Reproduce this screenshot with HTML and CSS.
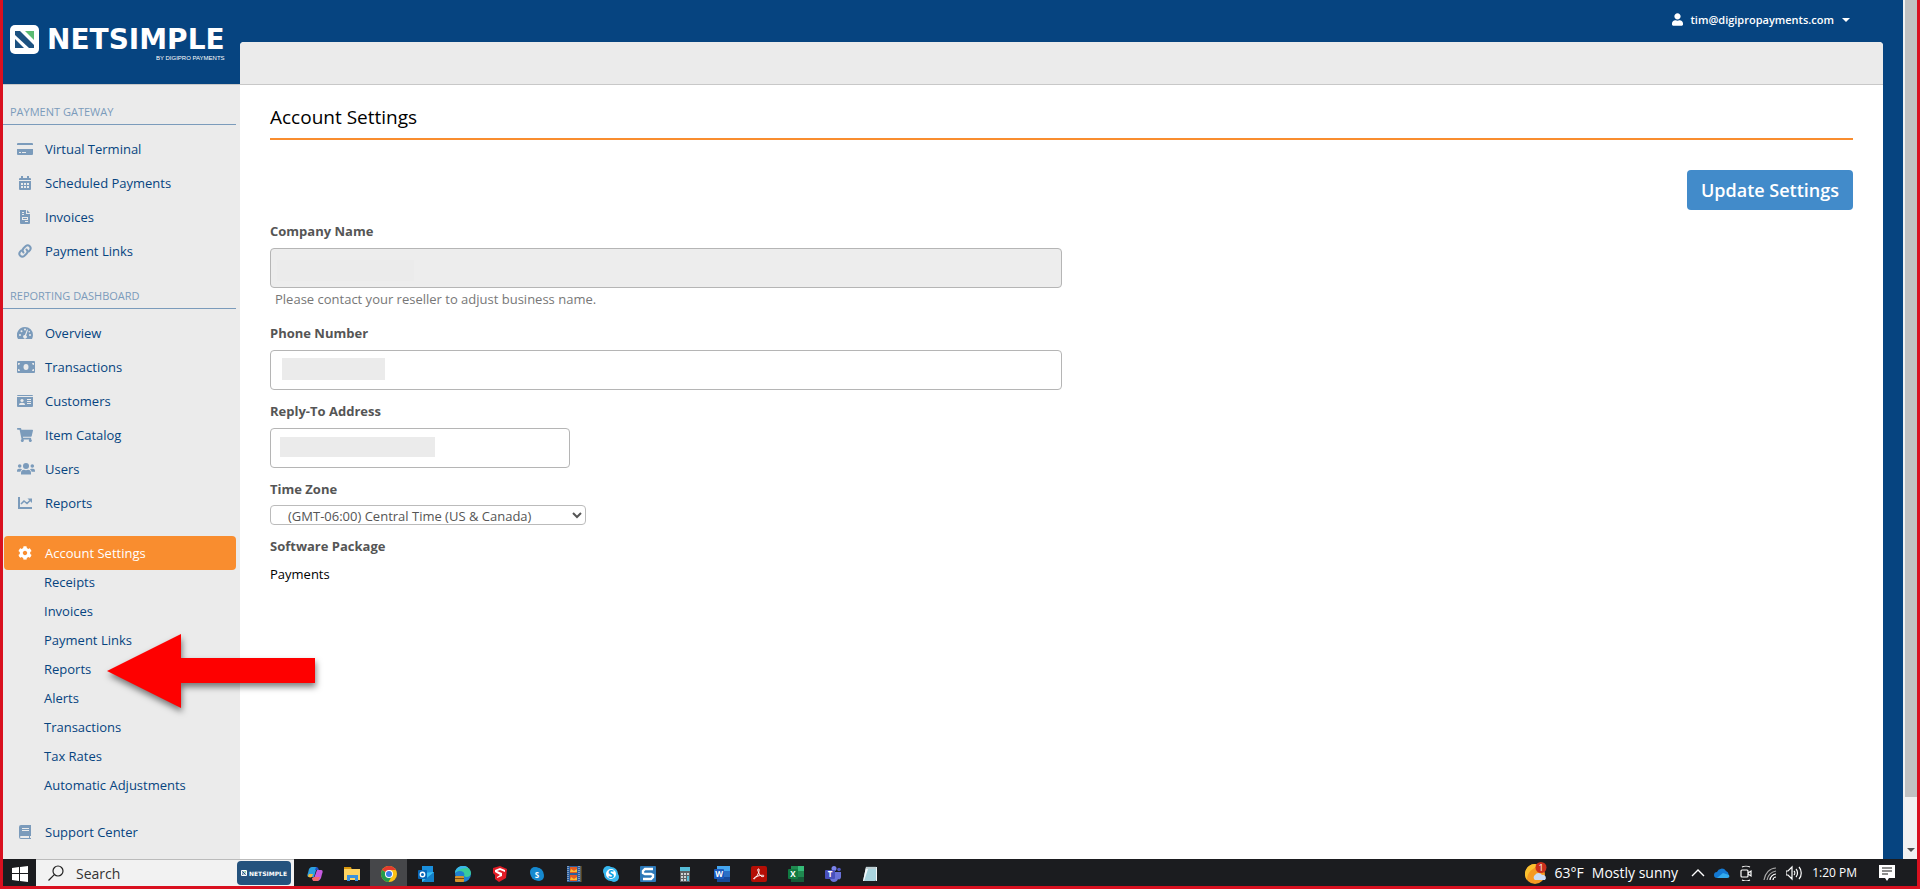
FILE: index.html
```html
<!DOCTYPE html>
<html lang="en">
<head>
  <meta charset="UTF-8" />
  <meta name="viewport" content="width=device-width, initial-scale=1" />
  <title>Account Settings - NetSimple</title>
  <link rel="stylesheet" href="styles.css">
</head>
<body>
  <div class="window">
    <div class="app">
      <aside class="sidebar">
        <a href="#" class="logo">
          <svg class="logo-mark" viewBox="0 0 29 29"><rect width="29" height="29" rx="5" fill="#fff"/><path d="M5 6h5l14 14v3h-5L5 10z" fill="#1c5180"/><path d="M5 14l9 9H5z" fill="#1c5180"/><path d="M15 6h9v9z" fill="#5bbb72"/></svg>
          <span class="logo-text">
            <span class="logo-name">NETSIMPLE</span>
            <span class="logo-by">BY DIGIPRO PAYMENTS</span>
          </span>
        </a>
        <nav class="menu">
          <h2>PAYMENT GATEWAY</h2>
          <ul>
            <li><a href="#"><svg viewBox="0 0 16 16"><path d="M1 2h14a1 1 0 0 1 1 1v1H0V3a1 1 0 0 1 1-1zM0 8h16v5a1 1 0 0 1-1 1H1a1 1 0 0 1-1-1zm2 3v1h2v-1zm3 0v1h4v-1z" fill-rule="evenodd"/></svg>Virtual Terminal</a></li>
            <li><a href="#"><svg viewBox="0 0 16 16"><path d="M4 1h2v2h4V1h2v2h1a1 1 0 0 1 1 1v1H2V4a1 1 0 0 1 1-1h1zM2 6h12v8a1 1 0 0 1-1 1H3a1 1 0 0 1-1-1zm2 2v2h2V8zm3 0v2h2V8zm3 0v2h2V8zm-6 3v2h2v-2zm3 0v2h2v-2zm3 0v2h2v-2z" fill-rule="evenodd"/></svg>Scheduled Payments</a></li>
            <li><a href="#"><svg viewBox="0 0 16 16"><path d="M3 1h6v4h4v9a1 1 0 0 1-1 1H4a1 1 0 0 1-1-1V2zm2 2v1h2V3zm0 2v1h2V5zm0 3v3h6V8zm1 1h4v1H6zm2 3v1h3v-1z" fill-rule="evenodd"/><path d="M10 1l3 3h-3z"/></svg>Invoices</a></li>
            <li><a href="#"><svg viewBox="0 0 16 16"><g fill="none" stroke="currentColor" stroke-width="2" stroke-linecap="round"><path d="M6.500 9.500a3 3 0 0 1 0-4.200l2.300-2.300a3 3 0 0 1 4.200 4.200l-1.300 1.300"/><path d="M9.500 6.500a3 3 0 0 1 0 4.200L7.200 13A3 3 0 0 1 3 8.800l1.300-1.300"/></g></svg>Payment Links</a></li>
          </ul>
          <h2 class="reporting">REPORTING DASHBOARD</h2>
          <ul>
            <li><a href="#"><svg viewBox="0 0 16 16"><path d="M8 2a8 8 0 0 1 8 8c0 1.500-.4 2.800-1 4H1a8 8 0 0 1 7-12z"/><g fill="#ebebeb"><circle cx="3" cy="10" r="1"/><circle cx="4.500" cy="6.300" r="1"/><circle cx="8" cy="4.500" r="1"/><circle cx="13" cy="10" r="1"/><circle cx="12.300" cy="6.800" r=".8"/><path d="M10 4.500l1 .3-1.900 5.600a1.800 1.800 0 1 1-1.200-.4z"/></g></svg>Overview</a></li>
            <li><a href="#"><svg class="wide" viewBox="0 0 18 16"><rect y="2" width="18" height="12" rx="1"/><g fill="#ebebeb"><ellipse cx="9" cy="8" rx="2.500" ry="3"/><path d="M1 4h2a2 2 0 0 1-2 2zM17 4h-2a2 2 0 0 0 2 2zM1 12h2a2 2 0 0 0-2-2zM17 12h-2a2 2 0 0 1 2-2z"/></g></svg>Transactions</a></li>
            <li><a href="#"><svg viewBox="0 0 16 16"><path d="M1 2h14a1 1 0 0 1 1 1H0a1 1 0 0 1 1-1zM0 4h16v9a1 1 0 0 1-1 1H1a1 1 0 0 1-1-1z"/><g fill="#ebebeb"><circle cx="5" cy="7.500" r="1.600"/><path d="M2 12c0-1.600 1-2.300 3-2.300s3 .7 3 2.300zM10 6h4v1h-4zM10 8h4v1h-4zM10 10h4v1h-4z"/></g></svg>Customers</a></li>
            <li><a href="#"><svg viewBox="0 0 576 512"><path d="M528.120 301.319l47.273-208C578.806 78.301 567.391 64 551.990 64H159.208l-9.166-44.810C147.758 8.021 137.930 0 126.529 0H24C10.745 0 0 10.745 0 24v16c0 13.255 10.745 24 24 24h69.883l70.248 343.435C147.325 417.100 136 435.222 136 456c0 30.928 25.072 56 56 56s56-25.072 56-56c0-15.674-6.447-29.835-16.824-40h209.647C430.447 426.165 424 440.326 424 456c0 30.928 25.072 56 56 56s56-25.072 56-56c0-22.172-12.888-41.332-31.579-50.405l5.517-24.276c3.413-15.018-8.002-29.319-23.403-29.319H218.117l-6.545-32h293.145c11.206 0 20.920-7.754 23.403-18.681z"/></svg>Item Catalog</a></li>
            <li><a href="#"><svg class="wide" viewBox="0 0 18 16"><circle cx="9" cy="5" r="3"/><circle cx="2.700" cy="5" r="1.800"/><circle cx="15.300" cy="5" r="1.800"/><path d="M4 13.500V12c0-2 1.200-3.200 3-3.200.6.300 1.200.5 2 .5s1.400-.2 2-.5c1.800 0 3 1.200 3 3.200v1.500zM0 10c0-1.400.8-2.300 2-2.300h1.500c.7 0 1.200.2 1.600.6A4 4 0 0 0 3.400 10.700H0zM18 10c0-1.400-.8-2.300-2-2.300h-1.500c-.7 0-1.200.2-1.600.6a4 4 0 0 1 1.700 2.400H18z"/></svg>Users</a></li>
            <li><a href="#"><svg viewBox="0 0 16 16"><path d="M1 2h2v10h12v2H1z"/><path d="M4 9l3-3 3 2.500 3-3" fill="none" stroke="currentColor" stroke-width="1.600"/><path d="M10.500 3.500H15V8z"/></svg>Reports</a></li>
          </ul>
          <ul class="settings">
            <li><a href="#" class="active"><svg viewBox="0 0 512 512"><path d="M487.400 315.700l-42.600-24.600c4.300-23.200 4.300-47 0-70.200l42.600-24.600c4.900-2.800 7.100-8.600 5.500-14-11.100-35.600-30-67.800-54.700-94.600-3.800-4.100-10-5.100-14.800-2.300L380.800 110c-17.900-15.400-38.500-27.300-60.800-35.100V25.800c0-5.600-3.900-10.500-9.400-11.700-36.700-8.200-74.300-7.800-109.200 0-5.500 1.200-9.400 6.100-9.400 11.700V75c-22.200 7.900-42.800 19.800-60.800 35.100L88.700 85.500c-4.900-2.800-11-1.900-14.800 2.300-24.700 26.700-43.600 58.900-54.700 94.600-1.700 5.400.6 11.200 5.500 14L67.300 221c-4.300 23.200-4.300 47 0 70.200l-42.600 24.600c-4.900 2.800-7.100 8.600-5.500 14 11.100 35.600 30 67.800 54.700 94.600 3.800 4.100 10 5.100 14.800 2.300l42.600-24.600c17.900 15.400 38.500 27.300 60.800 35.100v49.200c0 5.600 3.900 10.500 9.400 11.700 36.700 8.200 74.300 7.800 109.200 0 5.500-1.200 9.400-6.100 9.400-11.700v-49.200c22.200-7.900 42.800-19.800 60.800-35.100l42.600 24.600c4.900 2.800 11 1.900 14.800-2.300 24.700-26.700 43.600-58.900 54.700-94.600 1.500-5.500-.7-11.300-5.600-14.100zM256 336c-44.100 0-80-35.900-80-80s35.900-80 80-80 80 35.900 80 80-35.900 80-80 80z"/></svg>Account Settings</a>
              <ul class="submenu">
                <li><a href="#">Receipts</a></li>
                <li><a href="#">Invoices</a></li>
                <li><a href="#">Payment Links</a></li>
                <li class="pointed"><a href="#">Reports</a>
                  <svg class="arrow" viewBox="0 0 220 86"><path d="M2 38L76 1v24h134v25H76v25z" fill="#fe0000"/></svg>
                </li>
                <li><a href="#">Alerts</a></li>
                <li><a href="#">Transactions</a></li>
                <li><a href="#">Tax Rates</a></li>
                <li><a href="#">Automatic Adjustments</a></li>
              </ul>
            </li>
          </ul>
          <ul class="support">
            <li><a href="#"><svg viewBox="0 0 16 16"><path d="M4 1h10v11h-1v2h1v1H4a2 2 0 0 1-2-2V3a2 2 0 0 1 2-2zm1 3v1h7V4zm0 2v1h7V6zm-1 6a1 1 0 0 0 0 2h8v-2z" fill-rule="evenodd"/></svg>Support Center</a></li>
          </ul>
        </nav>
      </aside>

      <div class="main">
        <header>
          <button type="button" class="user">
            <svg class="user-icon" viewBox="0 0 448 512"><path d="M224 256c70.700 0 128-57.300 128-128S294.700 0 224 0 96 57.300 96 128s57.300 128 128 128zm89.600 32h-16.700c-22.200 10.200-46.900 16-72.900 16s-50.600-5.800-72.900-16h-16.700C60.200 288 0 348.200 0 422.400V464c0 26.500 21.500 48 48 48h352c26.500 0 48-21.500 48-48v-41.600c0-74.200-60.200-134.400-134.400-134.400z"/></svg>
            tim@digipropayments.com
            <svg class="caret" viewBox="0 0 8 4"><path d="M0 0h8L4 4z"/></svg>
          </button>
        </header>
        <main class="panel">
          <div class="panel-top"></div>
          <form class="content">
            <h1>Account Settings</h1>
            <div class="actions"><button type="submit" class="btn">Update Settings</button></div>

            <label for="company">Company Name</label>
            <div class="field half">
              <input type="text" id="company" disabled />
              <span class="mask mask-company"></span>
            </div>
            <p class="help">Please contact your reseller to adjust business name.</p>

            <label for="phone">Phone Number</label>
            <div class="field half">
              <input type="text" id="phone" />
              <span class="mask mask-phone"></span>
            </div>

            <label for="reply">Reply-To Address</label>
            <div class="field short">
              <input type="text" id="reply" />
              <span class="mask mask-reply"></span>
            </div>

            <label for="zone">Time Zone</label>
            <select id="zone">
              <option>(GMT-06:00) Central Time (US &amp; Canada)</option>
            </select>

            <h3>Software Package</h3>
            <p class="package">Payments</p>
          </form>
        </main>
      </div>

      <div class="scrollbar">
        <div class="thumb"></div>
        <svg viewBox="0 0 8 4"><path d="M0 0h8L4 4z" fill="#505050"/></svg>
      </div>
    </div>

    <div class="taskbar">
      <button type="button" class="start" aria-label="Start"><svg viewBox="0 0 16 16"><path d="M0 2l7-1v6H0zM8 1l8-1v7H8zM0 8h7v7l-7-1zM8 8h8v8l-8-1z" fill="#fff"/></svg></button>
      <div class="search">
        <svg viewBox="0 0 16 16"><circle cx="10" cy="6" r="5" fill="none" stroke="#222" stroke-width="1.200"/><path d="M6.300 9.700L.5 15.500" stroke="#222" stroke-width="1.200"/></svg>
        <input type="text" placeholder="Search" aria-label="Search" />
        <span class="badge">
          <svg viewBox="0 0 29 29"><rect width="29" height="29" rx="5" fill="#fff"/><path d="M5 6h5l14 14v3h-5L5 10zM5 14l9 9H5z" fill="#1c5180"/><path d="M14 6h10v9z" fill="#5bbb72"/></svg>
          NETSIMPLE
        </span>
      </div>
      <div class="pins">
        <!-- Copilot -->
        <button type="button"><svg viewBox="0 0 16 16"><path d="M5 1h5l-3 10H2C0 11 0 9 1 7l1-4c1-1 1-2 3-2z" fill="#2b9fe0"/><path d="M2 8h4l-1 3c-2 1-4 0-4-1z" fill="#f0b93a"/><path d="M9 1c2 0 2 1 3 3H8z" fill="#2352c4"/><path d="M10 4h4c2 0 2 2 1 4l-1 4c-1 2-2 3-4 3H6z" fill="#c65be0"/><path d="M7 11h6l-2 4H7c-1 0-2-1-2-3z" fill="#f16a6c"/></svg></button>
        <!-- File Explorer -->
        <button type="button"><svg viewBox="0 0 16 16"><path d="M0 1h7l1 3H0z" fill="#d9980d"/><path d="M0 3h16v11H0z" fill="#fdd361"/><path d="M3 15V9h11v6h-3v-3H6v3z" fill="#3a92dd"/></svg></button>
        <!-- Chrome -->
        <button type="button" class="current"><svg viewBox="0 0 16 16"><circle cx="8" cy="8" r="8" fill="#fbc116"/><path d="M8 8L1.100 4A8 8 0 0 1 15 4z" fill="#e33b2e"/><path d="M1.100 4a8 8 0 0 0 6.400 12L11 10z" fill="#249b4b"/><path d="M15 4H8v4l3 2z" fill="#fbc116"/><circle cx="8" cy="8" r="4" fill="#fff"/><circle cx="8" cy="8" r="3" fill="#3a7de8"/></svg></button>
        <!-- Outlook -->
        <button type="button"><svg viewBox="0 0 16 16"><path d="M4 0h11v10H4z" fill="#1a8fdc"/><path d="M4 7l12-1v10H4z" fill="#38bdf2"/><path d="M4 16L16 6v10z" fill="#1380c8"/><rect y="4" width="9" height="9" rx="1" fill="#0868b8"/><circle cx="4.500" cy="8.500" r="2.200" fill="none" stroke="#fff" stroke-width="1.400"/></svg></button>
        <!-- Edge -->
        <button type="button"><svg viewBox="0 0 16 16"><circle cx="8" cy="8" r="8" fill="#1f80cf"/><path d="M0 7C1-2 15-2 16 7c0 4-5 5-7 3 2-4-4-7-9-3z" fill="#3acb9c"/><path d="M0 7C1-2 12-1 13 2 8 2 4 3 0 7z" fill="#39b7e8"/><rect y="10" width="9" height="6" rx="1" fill="#d4942c"/><path d="M0 12h9v1H0z" fill="#7c4a0c"/></svg></button>
        <!-- SketchUp -->
        <button type="button"><svg viewBox="0 0 16 16"><path d="M1 2l7-2 7 3-1 9-7 4-4-3V9L1 7z" fill="#e21c26"/><path d="M3 4l5-2 5 2v2L8 4 5 5l5 2v3l-5 2v-1l3-2-5-3z" fill="#fff"/></svg></button>
        <button type="button"><svg viewBox="0 0 16 16"><circle cx="6" cy="6" r="5" fill="#1689cf"/><circle cx="10" cy="10" r="5" fill="#1689cf"/><circle cx="8" cy="8" r="6.500" fill="#1689cf"/><text x="8" y="12" class="glyph">S</text></svg></button>
        <!-- Movie clips -->
        <button type="button"><svg viewBox="0 0 16 16"><path d="M1 0h14v16H1z" fill="#2d5e9c"/><path d="M4 1h7v6H4zM4 9h7v6H4z" fill="#e35b22"/><path d="M5 3l3 2 3-2v3H4zM5 11l3 2 3-2v3H4z" fill="#f8bd35"/><path d="M2 0v16M13 0v16" stroke="#cfdcec" stroke-dasharray="1 1"/><path d="M15 0v16" stroke="#8c641f"/></svg></button>
        <!-- Skype -->
        <button type="button"><svg viewBox="0 0 16 16"><circle cx="5" cy="5" r="5" fill="#37b7ee"/><circle cx="11" cy="11" r="5" fill="#37b7ee"/><circle cx="8" cy="8" r="6" fill="#fff" stroke="#37b7ee" stroke-width="2"/><text x="8" y="12" class="glyph skype">S</text></svg></button>
        <!-- Snagit -->
        <button type="button"><svg viewBox="0 0 16 16"><rect width="16" height="16" rx="1" fill="#2c78b8"/><path d="M13 3H5L3 5v2l2 1h6l2 1v2l-2 2H3" fill="none" stroke="#fff" stroke-width="2.400"/></svg></button>
        <!-- Calculator -->
        <button type="button"><svg viewBox="0 0 16 16"><path d="M3 1h10v15H3z" fill="#5d6064"/><path d="M3 1h10v4H3z" fill="#56bdd8"/><path d="M4 7h2v2H4zM7 7h2v2H7zM4 10h2v2H4zM7 10h2v2H7zM4 13h2v2H4zM7 13h2v2H7zM10 7h2v2h-2z" fill="#cfd2d5"/><path d="M10 10h2v5h-2z" fill="#56bdd8"/></svg></button>
        <!-- Word -->
        <button type="button"><svg viewBox="0 0 16 16"><path d="M3 0h13v16H3z" fill="#2a6fc6"/><path d="M3 0h13v5H3z" fill="#44a5ef"/><path d="M3 11h13v5H3z" fill="#174a9a"/><rect y="3" width="10" height="10" rx="1" fill="#1a5abd"/><text x="5" y="11" class="glyph">W</text></svg></button>
        <!-- Acrobat -->
        <button type="button"><svg viewBox="0 0 16 16"><rect width="16" height="16" rx="2" fill="#b50e05"/><path d="M7 3c2-1 1 3 0 5s-3 5-4 5 0-2 4-3 6-1 6 0-3 1-4-1-3-5-2-6z" fill="none" stroke="#fff"/></svg></button>
        <!-- Excel -->
        <button type="button"><svg viewBox="0 0 16 16"><path d="M3 0h13v16H3z" fill="#1f8a50"/><path d="M10 0h6v5h-6z" fill="#36bd79"/><path d="M3 11h13v5H3z" fill="#165c38"/><rect y="3" width="10" height="10" rx="1" fill="#117a41"/><text x="5" y="11" class="glyph">X</text></svg></button>
        <!-- Teams -->
        <button type="button"><svg viewBox="0 0 16 16"><circle cx="9" cy="2.500" r="2.500" fill="#7b83eb"/><circle cx="14" cy="3.500" r="1.800" fill="#5159c4"/><path d="M5 6h11v5c0 2-2 3-3 2-1 4-8 4-8-1z" fill="#6a72da"/><rect y="4" width="10" height="9" rx="1" fill="#4850bc"/><text x="5" y="11" class="glyph">T</text></svg></button>
        <!-- Notepad -->
        <button type="button"><svg viewBox="0 0 16 16"><path d="M4 1h11v13l-2 1H1z" fill="#a9d4de"/><path d="M4 1h11v2H4z" fill="#dfeef1"/><path d="M4 1L1 15h1L6 3zM14 3v12h1V3z" fill="#f4f7f8"/><path d="M5 0v3M7 0v3M9 0v3M11 0v3M13 0v3" stroke="#6b8288" stroke-width=".6"/></svg></button>
      </div>
      <div class="tray">
        <button type="button" class="weather">
          <svg viewBox="0 0 22 22"><circle cx="10" cy="12" r="10" fill="#f59a23"/><path d="M10 2a10 10 0 0 0-8 16C2 10 8 6 14 4z" fill="#fbc02f"/><path d="M10 18a3 3 0 0 1 0-5 4 4 0 0 1 7 0 3 3 0 0 1 3 5z" fill="#c9dcf7"/><circle cx="16" cy="5.500" r="5.500" fill="#c9301d"/><text x="16" y="9" class="count">1</text></svg>
          <span>63°F</span>
          <span>Mostly sunny</span>
        </button>
        <svg class="tray-icon" viewBox="0 0 16 16"><path d="M2 11l6-6 6 6" fill="none" stroke="#fff" stroke-width="1.400"/></svg>
        <svg class="tray-icon" viewBox="0 0 16 16"><path d="M3 13a3 3 0 0 1 0-6 5 5 0 0 1 9-1 4 4 0 0 1 1 7z" fill="#1479d2"/><path d="M3 13l6-5 6 2c1 2 0 3-2 3z" fill="#32abee"/></svg>
        <svg class="tray-icon" viewBox="0 0 16 16"><g fill="none" stroke="#fff" stroke-width="1.200"><rect x="3" y="5" width="7" height="7" rx="1"/><path d="M10 8l3-2v5l-3-2M4 2c2-1 6-1 8 0M4 15c2 1 6 1 8 0"/></g></svg>
        <svg class="tray-icon" viewBox="0 0 16 16"><g fill="none" stroke="#aaa" stroke-width="1.200"><path d="M2 15C3 8 8 3 14 3"/><path d="M5 15c1-5 4-8 9-9"/><path d="M8 15c0-3 3-6 6-6" stroke="#fff"/><path d="M11 15c0-1 1-3 3-3" stroke="#fff"/></g></svg>
        <svg class="tray-icon" viewBox="0 0 16 16"><g fill="none" stroke="#fff" stroke-width="1.200"><path d="M0 6h2l4-4v12l-4-4H0zM8 6c1 1 1 3 0 4M10 4c2 2 2 6 0 8M13 2c3 3 3 9 0 12"/></g></svg>
        <span class="clock">1:20 PM</span>
        <button type="button" class="notes" aria-label="Notifications"><svg viewBox="0 0 16 16"><path d="M0 0h16v13h-6l-2 3-2-3H0z" fill="#fff"/><path d="M3 3h10M3 6h10M3 9h6" stroke="#1b1b1b" stroke-width="1.200"/></svg></button>
      </div>
    </div>
  </div>
</body>
</html>
```

FILE: styles.css
```css
* {
  box-sizing: border-box;
}
body {
  margin: 0;
  font-family: 'Trebuchet MS', 'Open Sans', sans-serif;
  font-size: 13px;
  color: #000;
}
button {
  font-family: inherit;
  border: none;
  background: none;
  padding: 0;
  cursor: pointer;
}
ul {
  list-style: none;
  margin: 0;
  padding: 0;
}
.window {
  display: flex;
  flex-direction: column;
  min-height: 100vh;
  border: 3px solid #d9101f;
  border-top: none;
}
.app {
  flex: 1;
  display: flex;
  background-color: #064480;
}

/* sidebar */
.sidebar {
  width: 237px;
  flex-shrink: 0;
  display: flex;
  flex-direction: column;
}
.logo {
  display: flex;
  gap: 8px;
  height: 84px;
  padding: 25px 7px 0;
  color: #fff;
  text-decoration: none;
}
.logo-mark {
  width: 29px;
  height: 29px;
  flex-shrink: 0;
}
.logo-text {
  display: flex;
  flex-direction: column;
  align-items: flex-end;
}
.logo-name {
  font: bold 28px/30px 'DejaVu Sans', sans-serif;
}
.logo-by {
  font: 6px/6px 'Liberation Sans', sans-serif;
}
.menu {
  flex: 1;
  background-color: #ebebeb;
  border-top: 1px solid #c8c8c8;
  padding-bottom: 8px;
}
.menu h2 {
  margin: 0 4px 7px 0;
  padding: 18px 7px 3px;
  border-bottom: 1px solid #7b9bbb;
  font-size: 11px;
  line-height: 18px;
  font-weight: 400;
  color: #7b9bbb;
}
.menu .reporting {
  padding-top: 19px;
}
.menu a {
  display: flex;
  align-items: center;
  gap: 12px;
  height: 34px;
  padding-left: 14px;
  color: #064480;
  text-decoration: none;
}
.menu svg {
  width: 16px;
  height: 16px;
  flex-shrink: 0;
  color: #7b9bbb;
  fill: currentColor;
}
.menu .wide {
  width: 18px;
  margin-right: -2px;
}
.settings {
  margin-top: 16px;
}
.menu .active {
  margin: 0 4px 0 1px;
  padding-left: 13px;
  border-radius: 4px;
  background-color: #f98d2f;
  color: #fff;
}
.menu .active svg {
  height: 14px;
  color: #fff;
}
.submenu {
  margin-top: -3px;
}
.menu .submenu a {
  height: 29px;
  padding-left: 41px;
}
.pointed {
  position: relative;
}
.menu .arrow {
  position: absolute;
  left: 102px;
  top: -21px;
  z-index: 1;
  width: 220px;
  height: 86px;
  filter: drop-shadow(1px 4px 3px rgba(0, 0, 0, 0.5));
}
.support {
  margin-top: 16px;
}

/* main area */
.main {
  flex: 1;
  display: flex;
  flex-direction: column;
  padding-right: 20px;
}
header {
  display: flex;
  justify-content: flex-end;
  height: 42px;
  padding: 0 33px 3px 0;
}
.user {
  display: flex;
  align-items: center;
  gap: 8px;
  color: #fff;
  font-size: 11px;
  font-weight: 600;
}
.user svg {
  fill: #fff;
}
.user-icon {
  width: 11px;
  height: 13px;
}
.caret {
  width: 8px;
  height: 4px;
}
.panel {
  flex: 1;
  background-color: #fff;
  border-radius: 4px 4px 0 0;
}
.panel-top {
  height: 43px;
  background-color: #ebebeb;
  border-bottom: 1px solid #c8c8c8;
  border-radius: 4px 4px 0 0;
}
.content {
  padding: 17px 30px;
}
h1 {
  margin: 0 0 30px;
  padding-bottom: 6px;
  border-bottom: 2px solid #f98d2f;
  font-size: 19px;
  line-height: 30px;
  font-weight: 400;
}
.actions {
  display: flex;
  justify-content: flex-end;
  margin-bottom: 11px;
}
.btn {
  height: 40px;
  padding: 0 14px;
  border-radius: 4px;
  background-color: #428bca;
  color: #fff;
  font-size: 18px;
  font-weight: 600;
}
label, h3 {
  display: block;
  margin: 0 0 7px;
  font-size: 13px;
  line-height: 20px;
  font-weight: 700;
  color: #555;
}
.field {
  position: relative;
  margin-bottom: 11px;
}
.half {
  width: 50%;
}
.short {
  width: 300px;
}
.field input {
  display: block;
  width: 100%;
  height: 40px;
  padding: 0 12px;
  border: 1px solid #b5b5b5;
  border-radius: 4px;
  background-color: #fff;
  font-family: inherit;
  font-size: 13px;
}
.field input:disabled {
  background-color: #ededed;
}
/* hidden values */
.mask {
  position: absolute;
  background-color: #ebebeb;
}
.mask-company {
  left: 7px;
  top: 12px;
  width: 137px;
  height: 21px;
}
.mask-phone {
  left: 12px;
  top: 8px;
  width: 103px;
  height: 22px;
}
.mask-reply {
  left: 10px;
  top: 9px;
  width: 155px;
  height: 20px;
}
.help {
  margin: -9px 0 15px 5px;
  line-height: 18px;
  color: #777;
}
select {
  display: block;
  width: 316px;
  height: 20px;
  margin: -1px 0 11px;
  padding: 0 0 0 13px;
  border: 1px solid #bbb;
  border-radius: 4px;
  background-color: #fff;
  color: #555;
  font-family: inherit;
  font-size: 13px;
}
.package {
  margin: 8px 0 0;
  line-height: 20px;
}
.scrollbar {
  display: flex;
  flex-direction: column;
  justify-content: space-between;
  align-items: center;
  width: 14px;
  padding: 0 0 7px 2px;
  background-color: #f1f1f1;
}
.thumb {
  width: 100%;
  height: calc(100% - 55px);
  background-color: #c1c1c1;
}
.scrollbar svg {
  width: 8px;
  height: 4px;
}

/* taskbar */
.taskbar {
  display: flex;
  height: 27px;
  background-color: #1b1c1f;
  font-family: 'Segoe UI', 'Open Sans', sans-serif;
  color: #fff;
}
.start {
  width: 33px;
}
.start svg {
  width: 16px;
  height: 16px;
  vertical-align: middle;
}
.search {
  display: flex;
  align-items: center;
  width: 258px;
  padding: 0 3px 0 12px;
  background-color: #f2f2f2;
  border-top: 1px solid #bbb;
}
.search svg {
  width: 16px;
  height: 16px;
  flex-shrink: 0;
}
.search input {
  flex: 1;
  min-width: 0;
  padding: 0 0 0 12px;
  border: none;
  background: none;
  font-family: inherit;
  font-size: 14px;
}
.search input::placeholder {
  color: #333;
}
.badge {
  display: flex;
  align-items: center;
  justify-content: center;
  gap: 2px;
  width: 54px;
  height: 24px;
  border-radius: 4px;
  background-color: #24527d;
  color: #fff;
  font: bold 6px 'DejaVu Sans', sans-serif;
}
.badge svg {
  width: 6px;
  height: 6px;
}
.pins {
  display: flex;
  padding-left: 2px;
}
.pins button {
  width: 37px;
}
.pins svg {
  display: block;
  width: 16px;
  height: 16px;
  margin: 2px auto 0;
}
.pins .current {
  background-color: #46474a;
}
.glyph {
  font: bold 8px 'Open Sans', sans-serif;
  text-anchor: middle;
  fill: #fff;
}
.skype {
  font-size: 11px;
  fill: #0aa1e4;
}
.tray {
  display: flex;
  align-items: center;
  gap: 8px;
  margin-left: auto;
  padding-right: 22px;
}
.weather {
  display: flex;
  align-items: center;
  gap: 8px;
  margin-right: 4px;
  color: #fff;
  font-size: 14px;
}
.weather svg {
  width: 22px;
  height: 22px;
}
.count {
  font: 9px 'Open Sans', sans-serif;
  text-anchor: middle;
  fill: #fff;
}
.tray-icon {
  width: 16px;
  height: 16px;
}
.clock {
  margin: 0 14px 0 2px;
  font-size: 12px;
}
.notes svg {
  display: block;
  width: 16px;
  height: 16px;
}
```
